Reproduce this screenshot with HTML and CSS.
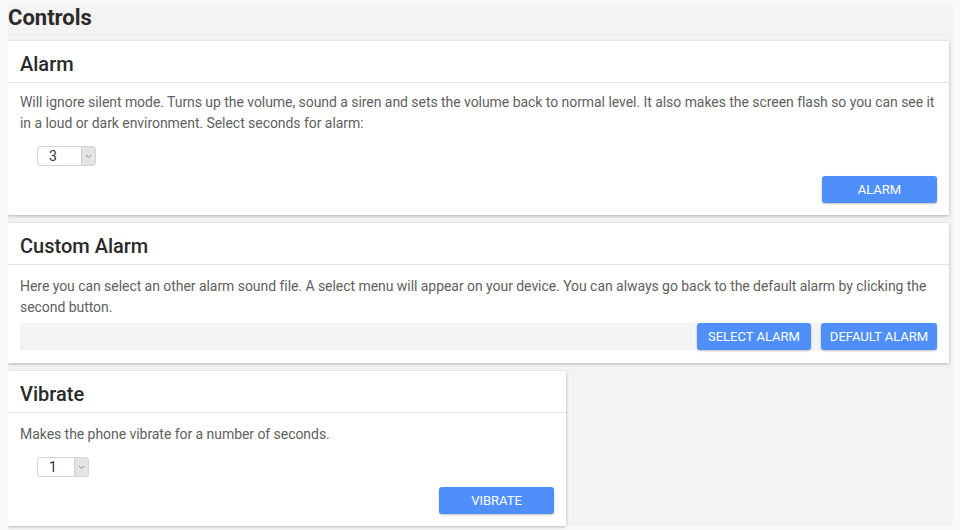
FILE: index.html
```html
<!DOCTYPE html>
<html lang="en">
<head>
    <meta charset="UTF-8">
    <meta name="viewport" content="width=device-width, initial-scale=1.0">
    <title>Controls</title>
    <link rel="stylesheet" href="styles.css">
</head>
<body>
    <div class="page">
        <h1 class="page-title">Controls</h1>

        <div class="card">
            <div class="card-header">Alarm</div>
            <div class="card-body">
                <p class="card-text">Will ignore silent mode. Turns up the volume, sound a siren and sets the volume back to normal level. It also makes the screen flash so you can see it in a loud or dark environment. Select seconds for alarm:</p>
                <div class="select-row">
                    <div class="select select-wide">
                        <span class="select-value">3</span>
                        <span class="select-arrow"><svg width="7" height="5" viewBox="0 0 7 5"><path d="M1 1l2.5 2.5L6 1" fill="none" stroke="#888" stroke-width="1"/></svg></span>
                    </div>
                </div>
                <div class="actions">
                    <button class="btn btn-wide">Alarm</button>
                </div>
            </div>
        </div>

        <div class="card">
            <div class="card-header">Custom Alarm</div>
            <div class="card-body card-body-bar">
                <p class="card-text">Here you can select an other alarm sound file. A select menu will appear on your device. You can always go back to the default alarm by clicking the second button.</p>
                <div class="actions actions-bar">
                    <button class="btn btn-select">Select Alarm</button>
                    <button class="btn btn-default">Default Alarm</button>
                </div>
            </div>
        </div>

        <div class="card card-small">
            <div class="card-header">Vibrate</div>
            <div class="card-body">
                <p class="card-text card-text-short">Makes the phone vibrate for a number of seconds.</p>
                <div class="select-row">
                    <div class="select">
                        <span class="select-value">1</span>
                        <span class="select-arrow"><svg width="7" height="5" viewBox="0 0 7 5"><path d="M1 1l2.5 2.5L6 1" fill="none" stroke="#888" stroke-width="1"/></svg></span>
                    </div>
                </div>
                <div class="actions">
                    <button class="btn btn-wide">Vibrate</button>
                </div>
            </div>
        </div>
    </div>
</body>
</html>
```

FILE: styles.css
```css
body {
    font-family: Roboto, 'Liberation Sans', sans-serif;
    background-color: #f9f9f9;
    color: #5f5f5f;
    margin: 3px 7px 0 8px;
}

.page {
    background-color: #f3f3f3;
    padding: 0 4px 0 0;
}

.page-title {
    font-size: 22px;
    font-weight: bold;
    color: #2b2b2b;
    margin: 0;
    padding: 2px 0 10px;
    line-height: 26px;
}

.card {
    background-color: #fff;
    box-shadow: 0 1px 3px rgba(0, 0, 0, 0.28);
    margin-bottom: 8px;
}

.card-small {
    width: 558px;
}

.card-header {
    font-size: 20px;
    font-weight: 500;
    color: #2a2a2a;
    padding: 0 12px;
    height: 41px;
    line-height: 46px;
    border-bottom: 1px solid #e2e2e2;
}

.card-body {
    padding: 9px 12px 12px;
}

.card-body-bar {
    padding-top: 11px;
    padding-bottom: 13px;
}

.card-text {
    font-size: 14px;
    line-height: 21px;
    letter-spacing: -0.05px;
    margin: 0 0 6px;
}

.card-body-bar .card-text {
    margin-bottom: 5px;
}

.card-text-short {
    margin-top: 2px;
}

.select-row {
    padding: 6px 0 0 17px;
}

.select {
    display: flex;
    width: 52px;
    height: 20px;
    border: 1px solid #d4d4d4;
    border-radius: 3px;
    box-sizing: border-box;
    overflow: hidden;
    font-size: 14px;
    color: #333;
}

.select-wide {
    width: 59px;
}

.select-value {
    flex: 1;
    line-height: 18px;
    padding-left: 11px;
}

.select-arrow {
    width: 13px;
    background-color: #e3e3e3;
    border-left: 1px solid #d0d0d0;
    display: flex;
    align-items: center;
    justify-content: center;
}

.actions {
    display: flex;
    justify-content: flex-end;
    gap: 10px;
    margin-top: 10px;
}

.actions-bar {
    background-color: #f3f3f3;
    margin-top: 0;
}

.btn {
    background-color: #4f8ff9;
    color: #fff;
    border: none;
    border-radius: 3px;
    height: 27px;
    padding: 0;
    font-family: Roboto, 'Liberation Sans', sans-serif;
    font-size: 13px;
    text-transform: uppercase;
    box-shadow: 0 1px 2px rgba(0, 0, 0, 0.25);
    cursor: pointer;
}

.btn-wide {
    width: 115px;
}

.btn-select {
    width: 114px;
}

.btn-default {
    width: 116px;
}
```
